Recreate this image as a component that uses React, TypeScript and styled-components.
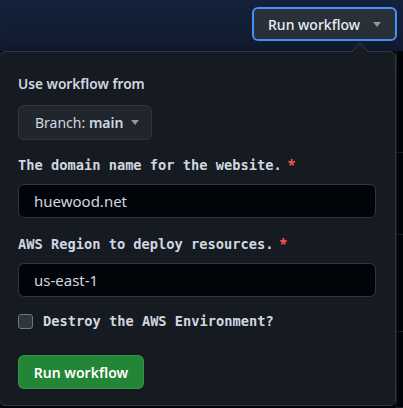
import * as React from 'react'
import styled, { createGlobalStyle } from 'styled-components'

const GlobalStyle = createGlobalStyle`
  html, body {
    margin: 0;
    padding: 0;
    background: #0d1117;
  }
  * {
    box-sizing: border-box;
  }
`

const Page = styled.div`
  position: relative;
  width: 403px;
  height: 408px;
  overflow: hidden;
  font-family: 'Noto Sans', 'Open Sans', sans-serif;
  color: #e6edf3;
`

const Header = styled.header`
  height: 51px;
  display: flex;
  justify-content: flex-end;
  align-items: flex-start;
  padding: 7px 6px 0 0;
  background: linear-gradient(180deg, #15213a 0%, #111c31 100%);
`

const RunMenuButton = styled.button`
  width: 145px;
  height: 34px;
  display: flex;
  align-items: center;
  justify-content: space-between;
  padding: 0 14px 0 14px;
  border: 2px solid #4493f8;
  border-radius: 6px;
  background: #2a3038;
  color: #e6edf3;
  font-family: inherit;
  font-size: 14px;
  font-weight: 500;
`

const Rows = styled.div`
  display: flex;
  flex-direction: column;
  background: #010409;
`

const Row = styled.div<{ $h: number }>`
  height: ${(p) => p.$h}px;
  border-bottom: 1px solid #21262d;
  border-left: 1px solid #21262d;
  margin-left: 396px;
`

const Panel = styled.div`
  position: absolute;
  top: 51px;
  left: -1px;
  width: 397px;
  height: 355px;
  background: #161b22;
  border: 1px solid #30363d;
  border-radius: 6px;
  box-shadow: 0 8px 24px rgba(1, 4, 9, 0.6);
  padding: 21px 19px 0 18px;
  display: flex;
  flex-direction: column;
  align-items: flex-start;
`

const Caret = styled.div`
  position: absolute;
  top: -7px;
  right: 29px;
  width: 12px;
  height: 12px;
  background: #161b22;
  border-top: 1px solid #30363d;
  border-left: 1px solid #30363d;
  transform: rotate(45deg);
`

const Title = styled.div`
  font-size: 13.7px;
  font-weight: 600;
  line-height: 21px;
  color: #d1d7e0;
`

const BranchButton = styled.button`
  margin-top: 11px;
  width: 134px;
  height: 35px;
  display: flex;
  align-items: center;
  gap: 8px;
  padding: 0 0 0 16px;
  background: #21262d;
  border: 1px solid #30363d;
  border-radius: 6px;
  color: #d1d7e0;
  font-family: inherit;
  font-size: 14px;
`

const Strong = styled.span`
  font-weight: 600;
`

const Label = styled.label<{ $top: number }>`
  margin-top: ${(p) => p.$top}px;
  font-family: 'DejaVu Sans Mono', 'Liberation Mono', monospace;
  font-weight: 700;
  font-size: 13.7px;
  line-height: 18px;
  color: #d1d7e0;
  display: flex;
  align-items: center;
  gap: 6px;
`

const Required = styled.span`
  color: #f85149;
  font-family: 'Noto Sans', sans-serif;
`

const Input = styled.input`
  margin-top: 10px;
  width: 358px;
  height: 34px;
  padding: 0 15px;
  background: #010409;
  border: 1px solid #30363d;
  border-radius: 6px;
  color: #d1d7e0;
  font-family: 'Noto Sans', sans-serif;
  font-size: 15px;
  outline: none;
`

const CheckRow = styled.label`
  margin-top: 16px;
  display: flex;
  align-items: center;
  gap: 10px;
  font-family: 'DejaVu Sans Mono', 'Liberation Mono', monospace;
  font-weight: 700;
  font-size: 13.7px;
  color: #d1d7e0;
`

const Check = styled.span`
  width: 15px;
  height: 15px;
  border: 1px solid #6e7681;
  border-radius: 3px;
  background: #30363d;
`

const SubmitButton = styled.button`
  margin-top: 26px;
  width: 126px;
  height: 34px;
  background: #238636;
  border: 1px solid rgba(240, 246, 252, 0.1);
  border-radius: 6px;
  color: #ffffff;
  font-family: 'Noto Sans', sans-serif;
  font-size: 14px;
  font-weight: 600;
`

const Triangle = () => (
  <svg width="8" height="5" viewBox="0 0 8 5">
    <path d="M0 0h8L4 5z" fill="#9198a1" />
  </svg>
)

const App: React.FC = () => {
  return (
    <Page>
      <GlobalStyle />
      <Header>
        <RunMenuButton>
          Run workflow
          <Triangle />
        </RunMenuButton>
      </Header>
      <Rows>
        <Row $h={102} />
        <Row $h={82} />
        <Row $h={97} />
        <Row $h={76} />
      </Rows>
      <Panel>
        <Caret />
        <Title>Use workflow from</Title>
        <BranchButton>
          <span>
            Branch: <Strong>main</Strong>
          </span>
          <Triangle />
        </BranchButton>
        <Label $top={16}>
          The domain name for the website.<Required>*</Required>
        </Label>
        <Input defaultValue="huewood.net" />
        <Label $top={17}>
          AWS Region to deploy resources.<Required>*</Required>
        </Label>
        <Input defaultValue="us-east-1" />
        <CheckRow>
          <Check />
          Destroy the AWS Environment?
        </CheckRow>
        <SubmitButton>Run workflow</SubmitButton>
      </Panel>
    </Page>
  )
}

export default App
